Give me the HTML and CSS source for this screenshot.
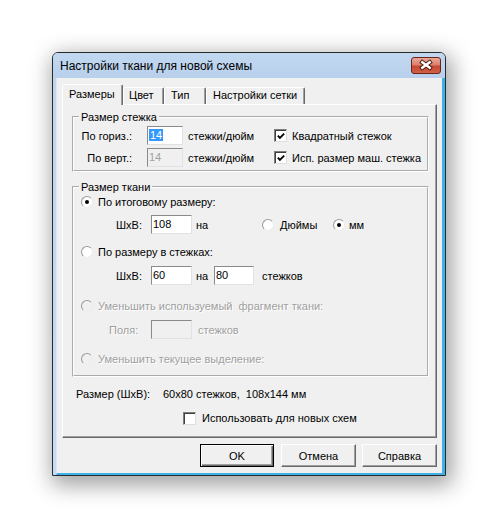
FILE: index.html
```html
<!DOCTYPE html>
<html lang="ru">
<head>
<meta charset="utf-8">
<title>Настройки ткани для новой схемы</title>
<link rel="stylesheet" href="styles.css">
</head>
<body>
<div class="window">
  <div class="titlebar">
    <span class="title">Настройки ткани для новой схемы</span>
    <span class="close" aria-label="Закрыть">
      <svg width="30" height="16" viewBox="0 0 30 16">
        <path d="M11 5 L19 11 M19 5 L11 11" stroke="#4a1c12" stroke-width="4.6" stroke-linecap="square" fill="none"/>
        <path d="M11 5 L19 11 M19 5 L11 11" stroke="#ffffff" stroke-width="2.6" stroke-linecap="square" fill="none"/>
      </svg>
    </span>
  </div>
  <div class="client">
    <div class="tabs">
      <div class="tab tab-active">Размеры</div>
      <div class="tab tab-color">Цвет</div>
      <div class="tab tab-type">Тип</div>
      <div class="tab tab-grid">Настройки сетки</div>
    </div>
    <div class="panel">
      <fieldset class="group group-stitch">
        <legend>Размер стежка</legend>
        <div class="row row-edit">
          <span class="lbl-right">По гориз.:</span>
          <span class="edit edit-s"><span class="selected">14</span></span>
          <span class="unit">стежки/дюйм</span>
          <span class="check"><svg width="11" height="11" viewBox="0 0 11 11"><path d="M2 4.5 L4.3 7 L9 2.3" stroke="#000" stroke-width="2" fill="none"/></svg></span>
          <span class="check-lbl">Квадратный стежок</span>
        </div>
        <div class="row row-edit gap-3">
          <span class="lbl-right">По верт.:</span>
          <span class="edit edit-s edit-disabled">14</span>
          <span class="unit">стежки/дюйм</span>
          <span class="check"><svg width="11" height="11" viewBox="0 0 11 11"><path d="M2 4.5 L4.3 7 L9 2.3" stroke="#000" stroke-width="2" fill="none"/></svg></span>
          <span class="check-lbl">Исп. размер маш. стежка</span>
        </div>
      </fieldset>

      <fieldset class="group group-fabric">
        <legend>Размер ткани</legend>
        <div class="row row-radio">
          <span class="radio radio-on"><span class="dot"></span></span>
          <span class="radio-lbl">По итоговому размеру:</span>
        </div>
        <div class="row row-edit gap-5">
          <span class="lbl-wh">ШхВ:</span>
          <span class="edit edit-m">108</span>
          <span class="na na-wide">на</span>
          <span class="radio"></span>
          <span class="unit-lbl unit-inch">Дюймы</span>
          <span class="radio radio-on"><span class="dot"></span></span>
          <span class="unit-lbl unit-mm">мм</span>
        </div>
        <div class="row row-radio gap-10">
          <span class="radio"></span>
          <span class="radio-lbl">По размеру в стежках:</span>
        </div>
        <div class="row row-edit gap-6">
          <span class="lbl-wh">ШхВ:</span>
          <span class="edit edit-m">60</span>
          <span class="na">на</span>
          <span class="edit edit-n">80</span>
          <span class="stitches">стежков</span>
        </div>
        <div class="row row-radio gap-13 disabled">
          <span class="radio radio-disabled"></span>
          <span class="radio-lbl">Уменьшить используемый&nbsp; фрагмент ткани:</span>
        </div>
        <div class="row row-edit gap-6 disabled">
          <span class="lbl-fields">Поля:</span>
          <span class="edit edit-m edit-disabled"></span>
          <span class="stitches-d">стежков</span>
        </div>
        <div class="row row-radio gap-12 disabled">
          <span class="radio radio-disabled"></span>
          <span class="radio-lbl">Уменьшить текущее выделение:</span>
        </div>
      </fieldset>

      <div class="row summary">
        <span class="summary-lbl">Размер (ШхВ):</span>
        <span>60x80 стежков,&nbsp; 108x144 мм</span>
      </div>
      <div class="row use-new">
        <span class="check check-empty"></span>
        <span class="check-lbl">Использовать для новых схем</span>
      </div>
    </div>
    <div class="buttons">
      <button class="btn btn-default">OK</button>
      <button class="btn">Отмена</button>
      <button class="btn">Справка</button>
    </div>
  </div>
</div>
</body>
</html>
```

FILE: styles.css
```css
* { box-sizing: border-box; }
html, body { margin: 0; background: #fff; }
body {
  font-family: "Liberation Sans", Arial, sans-serif;
  font-size: 11px;
  color: #000;
  padding: 52px 0 0 52px;
  height: 529px;
  overflow: hidden;
}

.window {
  width: 394px;
  border: 1px solid #262b30;
  border-radius: 6px 6px 0 0;
  background: linear-gradient(#bfd5ef, #c6dcf4);
  box-shadow: 3px 6px 22px 3px rgba(0, 0, 0, 0.38);
}

.titlebar {
  height: 25px;
  display: flex;
  align-items: center;
  padding: 0 4px 0 7px;
  border-radius: 5px 5px 0 0;
  background: linear-gradient(#c2d8f1, #b8d0ec);
}
.title {
  flex: 1;
  font-size: 12px;
  color: #000;
  white-space: nowrap;
}
.close {
  width: 30px;
  height: 17px;
  border: 1px solid #6b2418;
  border-radius: 3px;
  background: linear-gradient(#eaa899 0%, #dc806c 45%, #c8472e 55%, #cf6148 100%);
  display: flex;
  align-items: center;
  justify-content: center;
}
.close svg { display: block; margin-top: -1px; }

.client {
  margin-left: 3px;
  background: #f0f0f0;
  border-left: 1px solid #d9e6f5;
  border-right: 3px solid #3fb1e4;
  border-bottom: 2px solid #3fb1e4;
  padding: 6px 5px 6px 5px;
}

/* tabs */
.tabs {
  height: 20px;
  display: flex;
  align-items: flex-end;
}
.tab {
  height: 17px;
  line-height: 15px;
  padding-left: 5px;
  background: #f0f0f0;
  border: 1px solid;
  border-bottom: none;
  border-color: #fff #696969 transparent #fff;
  box-shadow: inset -1px 0 0 #a0a0a0;
  border-radius: 2px 2px 0 0;
  white-space: nowrap;
}
.tab-active {
  position: relative;
  z-index: 1;
  width: 61px;
  height: 21px;
  line-height: 18px;
  padding-left: 6px;
  margin-bottom: -1px;
}
.tab-color { width: 41px; }
.tab-type { width: 42px; padding-left: 6px; }
.tab-grid { width: 99px; padding-left: 6px; }

/* panel */
.panel {
  border: 1px solid;
  border-color: #fff #696969 #696969 #fff;
  box-shadow: inset -1px -1px 0 #a0a0a0;
  padding: 5px 7px 12px 9px;
}

.group {
  margin: 0;
  padding: 0;
  min-width: 0;
  border: 2px groove #fff;
}
.group legend {
  margin-left: 5px;
  padding: 0 2px;
  height: 14px;
  line-height: 14px;
}
.group-stitch { padding: 2px 0 3px 0; }
.group-fabric { margin-top: 8px; padding: 0 0 8px 0; }

.row {
  display: flex;
  align-items: center;
  white-space: nowrap;
}
.row-edit { height: 19px; }
.row-radio { height: 16px; padding-left: 7px; }
.gap-3 { margin-top: 3px; }
.gap-5 { margin-top: 5px; }
.gap-6 { margin-top: 6px; }
.gap-10 { margin-top: 10px; }
.gap-12 { margin-top: 12px; }
.gap-13 { margin-top: 13px; }

.lbl-right { width: 58px; text-align: right; margin-right: 15px; }
.unit { width: 86px; margin-left: 5px; }
.check-lbl { margin-left: 5px; }

.edit {
  height: 19px;
  line-height: 17px;
  padding-left: 1px;
  background: #fff;
  border: 1px solid;
  border-color: #8a8a8a #e2e2e2 #e2e2e2 #8a8a8a;
}
.edit-s { width: 36px; }
.edit-m { width: 41px; }
.edit-n { width: 40px; }
.edit-disabled { background: #f0f0f0; color: #a0a0a0; }
.selected { background: #3399ff; color: #fff; padding: 0 1px; }

.check {
  width: 13px;
  height: 13px;
  background: #fff;
  border: 1px solid;
  border-color: #7d7d7d #dedede #dedede #7d7d7d;
  box-shadow: inset 1px 1px 0 #3f3f3f;
  display: flex;
  align-items: center;
  justify-content: center;
}
.check svg { display: block; margin: 1px 0 0 1px; }

.radio {
  width: 12px;
  height: 12px;
  border-radius: 50%;
  background: #fff;
  border: 1px solid;
  border-color: #9a9a9a #ececec #ececec #9a9a9a;
  display: flex;
  align-items: center;
  justify-content: center;
  flex: none;
}
.radio-disabled { background: #f0f0f0; }
.dot { width: 4px; height: 4px; border-radius: 50%; background: #000; }
.radio-lbl { margin-left: 5px; }

.lbl-wh { width: 35px; margin-left: 42px; }
.na { width: 18px; margin-left: 4px; }
.na-wide { width: 66px; }
.unit-inch { width: 53px; margin-left: 6px; }
.unit-mm { margin-left: 4px; }
.stitches { margin-left: 8px; }
.lbl-fields { width: 42px; margin-left: 35px; }
.stitches-d { margin-left: 6px; }

.disabled { color: #a0a0a0; text-shadow: 1px 1px 0 #fff; }

.summary { height: 14px; margin-top: 10px; padding-left: 4px; }
.summary-lbl { width: 87px; }
.use-new { height: 14px; margin-top: 10px; padding-left: 111px; }
.check-empty { box-shadow: inset 1px 1px 0 #3f3f3f; }
.use-new .check-lbl { margin-left: 6px; }

/* buttons */
.buttons {
  display: flex;
  justify-content: flex-end;
  margin-top: 6px;
  gap: 6px;
}
.btn {
  width: 75px;
  height: 23px;
  margin: 0;
  padding: 0;
  font: inherit;
  color: #000;
  background: #f0f0f0;
  border: 1px solid;
  border-color: #fff #696969 #696969 #fff;
  box-shadow: inset -1px -1px 0 #a0a0a0;
}
.btn-default {
  width: 74px;
  margin-right: 1px;
  border: 1px solid #000;
  box-shadow: inset 1px 1px 0 #fff, inset -1px -1px 0 #696969, inset -2px -2px 0 #a0a0a0;
}
```
